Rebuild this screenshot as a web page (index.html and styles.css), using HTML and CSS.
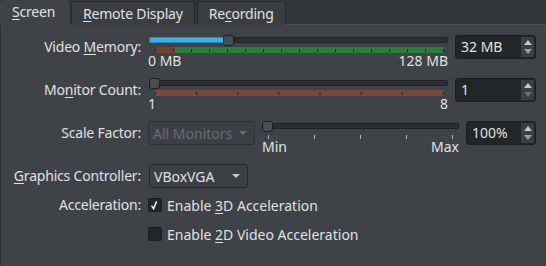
FILE: index.html
```html
<!DOCTYPE html>
<html lang="en">
<head>
    <meta charset="UTF-8">
    <title>Display settings</title>
    <link rel="stylesheet" href="styles.css">
</head>
<body>
    <div class="tabs">
        <div class="tab active"><u>S</u>creen</div>
        <div class="tab"><u>R</u>emote Display</div>
        <div class="tab">Re<u>c</u>ording</div>
    </div>
    <div class="panel">
        <!-- video memory -->
        <div class="row slider-row">
            <div class="label">Video <u>M</u>emory:</div>
            <div class="field">
                <div class="slider wide">
                    <div class="track">
                        <div class="fill" style="width: 73px"></div>
                        <div class="handle"></div>
                        <div class="groove"></div>
                    </div>
                    <div class="bar vram"></div>
                    <div class="ends"><span>0 MB</span><span>128 MB</span></div>
                </div>
                <div class="spin wide-spin">
                    <div class="val">32 MB</div>
                    <div class="arrows">
                        <svg width="8" height="5" viewBox="0 0 8 5"><path d="M0 5 L4 0 L8 5 Z" fill="#c6c8ca"/></svg>
                        <svg width="8" height="5" viewBox="0 0 8 5"><path d="M0 0 L4 5 L8 0 Z" fill="#9a9da0"/></svg>
                    </div>
                </div>
            </div>
        </div>
        <!-- monitors -->
        <div class="row slider-row">
            <div class="label">Mo<u>n</u>itor Count:</div>
            <div class="field">
                <div class="slider wide">
                    <div class="track">
                        <div class="handle"></div>
                        <div class="groove"></div>
                    </div>
                    <div class="bar monitors"></div>
                    <div class="ends"><span>1</span><span>8</span></div>
                </div>
                <div class="spin wide-spin">
                    <div class="val">1</div>
                    <div class="arrows">
                        <svg width="8" height="5" viewBox="0 0 8 5"><path d="M0 5 L4 0 L8 5 Z" fill="#c6c8ca"/></svg>
                        <svg width="8" height="5" viewBox="0 0 8 5"><path d="M0 0 L4 5 L8 0 Z" fill="#6f7376"/></svg>
                    </div>
                </div>
            </div>
        </div>
        <!-- scale -->
        <div class="row scale-row">
            <div class="label">Scale Factor:</div>
            <div class="field">
                <div class="combo disabled monitors-combo">
                    <span>All Monitors</span>
                    <svg width="8" height="4" viewBox="0 0 8 4"><path d="M0 0 L4 4 L8 0 Z" fill="#65696d"/></svg>
                </div>
                <div class="slider narrow">
                    <div class="track">
                        <div class="handle"></div>
                        <div class="groove"></div>
                    </div>
                    <div class="ticks"><i></i><i></i><i></i><i></i><i></i></div>
                    <div class="ends"><span>Min</span><span>Max</span></div>
                </div>
                <div class="spin small-spin">
                    <div class="val">100%</div>
                    <div class="arrows">
                        <svg width="8" height="5" viewBox="0 0 8 5"><path d="M0 5 L4 0 L8 5 Z" fill="#c6c8ca"/></svg>
                        <svg width="8" height="5" viewBox="0 0 8 5"><path d="M0 0 L4 5 L8 0 Z" fill="#9a9da0"/></svg>
                    </div>
                </div>
            </div>
        </div>
        <!-- controller -->
        <div class="row combo-row">
            <div class="label"><u>G</u>raphics Controller:</div>
            <div class="field">
                <div class="combo vga-combo">
                    <span>VBoxVGA</span>
                    <svg width="8" height="4" viewBox="0 0 8 4"><path d="M0 0 L4 4 L8 0 Z" fill="#c9cacb"/></svg>
                </div>
            </div>
        </div>
        <!-- acceleration -->
        <div class="row check-row">
            <div class="label">Acceleration:</div>
            <div class="field">
                <div class="check">
                    <svg width="14" height="14" viewBox="0 0 14 14"><path d="M3.6 7.6 L5.6 10.8 L8.6 3.2" fill="none" stroke="#eceded" stroke-width="1.6"/></svg>
                </div>
                <span>Enable <u>3</u>D Acceleration</span>
            </div>
        </div>
        <div class="row check-row second">
            <div class="label"></div>
            <div class="field">
                <div class="check"></div>
                <span>Enable <u>2</u>D Video Acceleration</span>
            </div>
        </div>
    </div>
</body>
</html>
```

FILE: styles.css
```css
html {
    height: 100%;
}

body {
    margin: 0;
    height: 100%;
    overflow: hidden;
    background: #3f4247;
    font-family: "Noto Sans", sans-serif;
    font-size: 14px;
    color: #e0e1e2;
}

u {
    text-decoration: underline;
    text-underline-offset: 2px;
}

/* tab bar */
.tabs {
    display: flex;
    align-items: flex-end;
    height: 25px;
    background: #31363b;
    box-shadow: inset 0 -1px #4b4e53;
}

.tab {
    height: 24px;
    box-sizing: border-box;
    line-height: 23px;
    padding: 0 11px;
    margin-left: 2px;
    letter-spacing: -0.2px;
    background: #3a3d42;
    border: 1px solid #26292c;
    border-bottom: none;
    border-radius: 3px 3px 0 0;
}

.tab.active {
    height: 25px;
    line-height: 24px;
    width: 69px;
    box-sizing: border-box;
    margin-left: 0;
    padding: 0 12px;
    background: #3f4247;
    border: none;
}

/* panel */
.panel {
    height: 240px;
    border-left: 1px solid #2d3034;
    padding-top: 9px;
}

.row {
    display: flex;
}

.label {
    width: 140px;
    text-align: right;
    height: 24px;
    line-height: 24px;
    flex-shrink: 0;
    white-space: nowrap;
    letter-spacing: -0.2px;
}

.field {
    display: flex;
    align-items: flex-start;
    margin-left: 7px;
}

.slider-row {
    height: 35px;
    margin-bottom: 8px;
}

.slider-row .label {
    margin-top: 1px;
}

.scale-row {
    height: 36px;
    margin-bottom: 7px;
}

.scale-row .label {
    margin-top: 1px;
}

.combo-row {
    height: 24px;
    margin-bottom: 6px;
}

.combo-row .label {
    margin-top: 1px;
}

.check-row {
    height: 24px;
    margin-bottom: 5px;
}

.check-row .field {
    align-items: center;
    height: 24px;
}

/* sliders */
.slider {
    display: flex;
    flex-direction: column;
}

.slider.wide {
    width: 300px;
}

.slider.narrow {
    width: 197px;
    margin-left: 7px;
}

.track {
    display: flex;
    align-items: center;
    height: 12px;
}

.wide .track {
    margin-left: 1px;
}

.fill {
    height: 4px;
    background: #3daee9;
    border: 1px solid #2f86b3;
    border-right: none;
    border-radius: 2px 0 0 2px;
}

.groove {
    flex: 1;
    height: 4px;
    background: #2b2f33;
    border: 1px solid #1f2225;
    border-left: none;
    border-radius: 0 2px 2px 0;
}

.handle {
    width: 11px;
    height: 11px;
    box-sizing: border-box;
    background: #4a4e53;
    border: 1px solid #1e2124;
    border-radius: 3px;
    flex-shrink: 0;
}

.bar {
    height: 6px;
    margin: 1px 4px 0 7px;
}

.bar.vram {
    background:
        linear-gradient(90deg, #1d2a1f 0 1px, transparent 1px) 0 2px / 18px 3px repeat-x,
        linear-gradient(90deg, #8a2b2b 0 1px, #6f4337 1px 20px, #2e7a3d 20px);
}

.bar.monitors {
    background:
        linear-gradient(90deg, #2b1d17 0 1px, transparent 1px) 0 2px / 41.14px 3px repeat-x,
        #77493a;
}

.ticks {
    display: flex;
    justify-content: space-between;
    height: 4px;
    margin: 3px 6px 0 6px;
}

.ticks i {
    width: 1px;
    background: #b4b6b8;
}

.ends {
    display: flex;
    justify-content: space-between;
    line-height: 16px;
}

/* spin boxes */
.spin {
    display: flex;
    height: 24px;
    box-sizing: border-box;
    margin-left: 7px;
    margin-top: 1px;
    background: #232629;
    border: 1px solid #1b1d20;
    border-radius: 3px;
}

.wide-spin {
    width: 81px;
}

.small-spin {
    width: 70px;
}

.val {
    flex: 1;
    padding-left: 5px;
    line-height: 22px;
}

.arrows {
    width: 13px;
    margin: 1px;
    background: #3b3f44;
    border-radius: 0 2px 2px 0;
    display: flex;
    flex-direction: column;
    justify-content: center;
    align-items: center;
    gap: 4px;
}

.arrows svg {
    display: block;
}

/* combos */
.combo {
    display: flex;
    align-items: center;
    justify-content: space-between;
    height: 24px;
    box-sizing: border-box;
    padding: 0 7px 0 4px;
    background: #3c3f44;
    border: 1px solid #26292c;
    border-radius: 3px;
    white-space: nowrap;
}

.monitors-combo {
    width: 107px;
    margin-top: 1px;
}

.vga-combo {
    width: 99px;
    margin-left: 1px;
    margin-top: 1px;
}

.combo.disabled {
    color: #686c71;
    border-color: #2e3135;
}

/* check boxes */
.check {
    width: 14px;
    height: 14px;
    box-sizing: border-box;
    background: #232629;
    border: 1px solid #1c1e21;
    border-radius: 2px;
    margin-right: 5px;
}

.check svg {
    display: block;
    margin: -1px;
}
```
